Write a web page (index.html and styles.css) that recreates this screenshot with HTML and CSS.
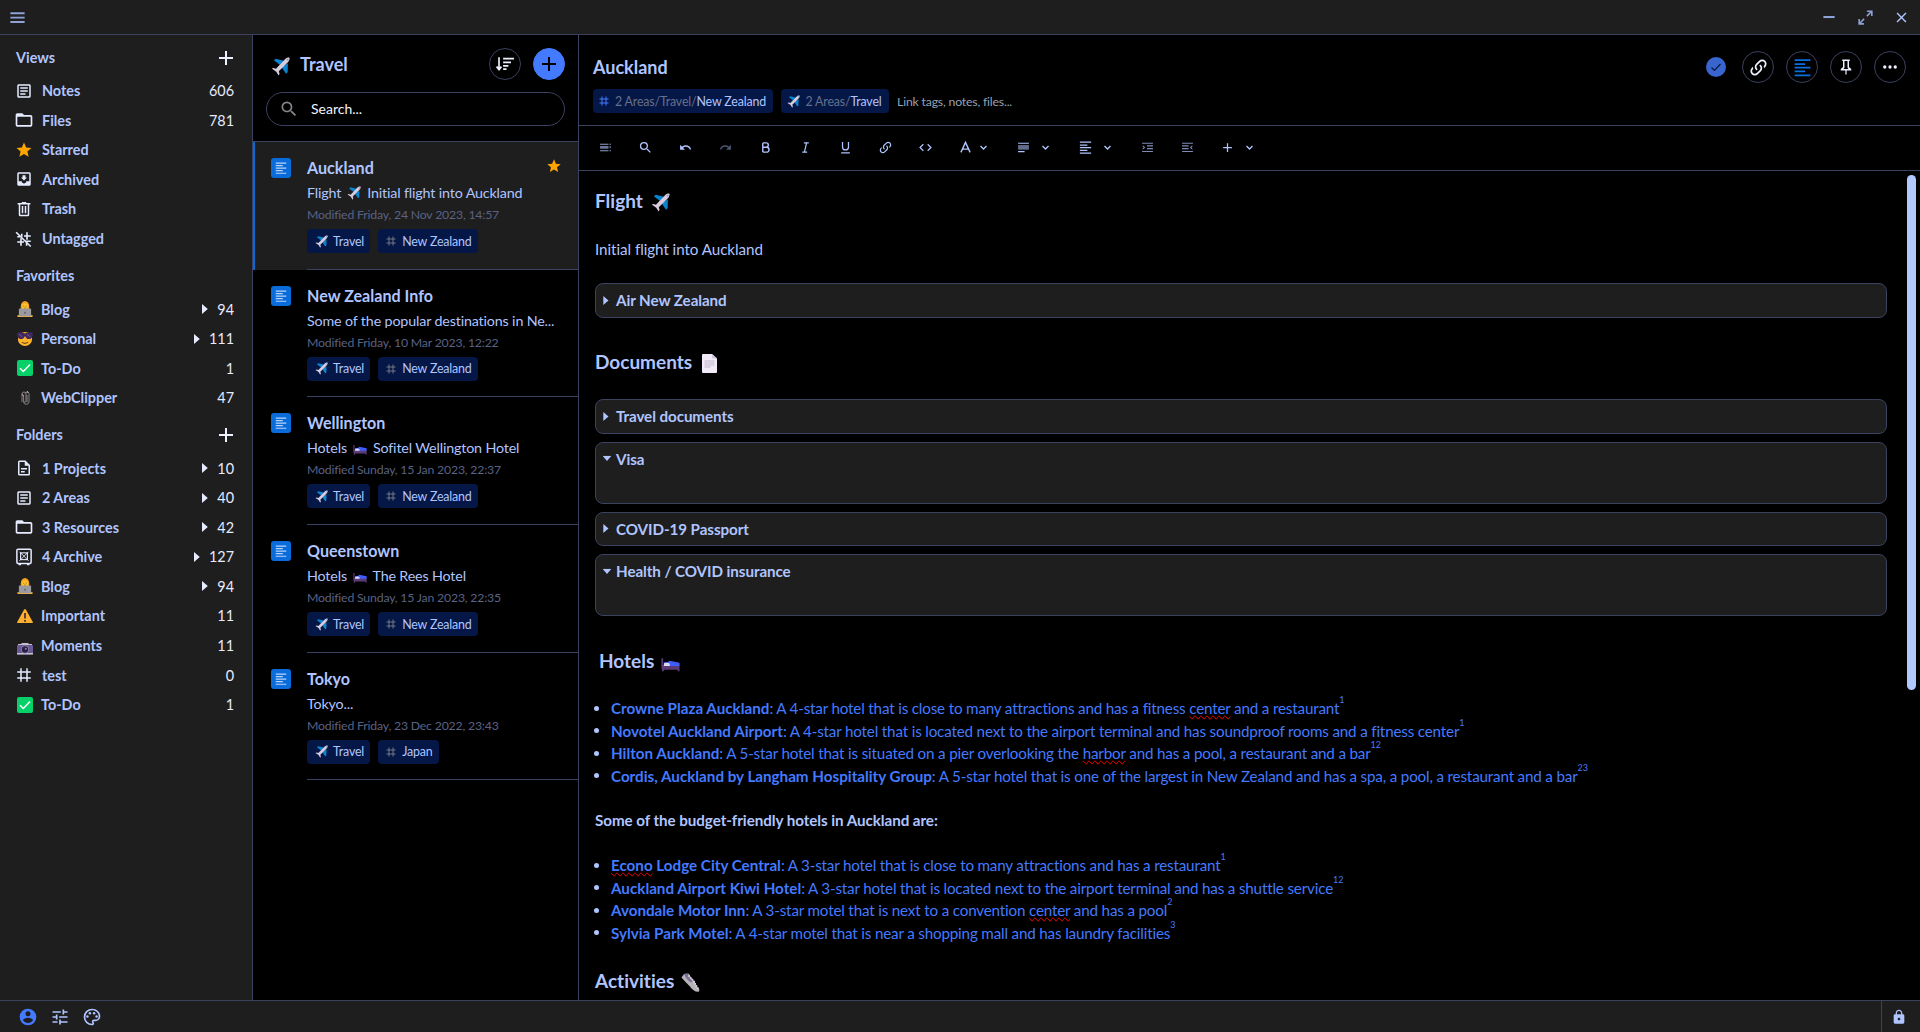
FILE: index.html
```html
<!DOCTYPE html>
<html lang="en">
<head>
<meta charset="utf-8">
<title>Auckland</title>
<link rel="stylesheet" href="styles.css">
</head>
<body>
<svg class="sprite" aria-hidden="true">
  <symbol id="menu" viewBox="0 0 24 24"><path d="M3 5.500h18v2.300H3zM3 11h18v2.300H3zM3 16.500h18v2.300H3z"/></symbol>
  <symbol id="plus" viewBox="0 0 24 24"><path d="M19 13h-6v6h-2v-6H5v-2h6V5h2v6h6z"/></symbol>
  <symbol id="article" viewBox="0 0 24 24"><path d="M19 5v14H5V5h14m0-2H5c-1.1 0-2 .9-2 2v14c0 1.1.9 2 2 2h14c1.1 0 2-.9 2-2V5c0-1.1-.9-2-2-2zm-5 14H7v-2h7v2zm3-4H7v-2h10v2zm0-4H7V7h10v2z"/></symbol>
  <symbol id="folder" viewBox="0 0 24 24"><path d="M20,18H4V8H20M20,6H12L10,4H4C2.89,4 2,4.89 2,6V18A2,2 0 0,0 4,20H20A2,2 0 0,0 22,18V8C22,6.89 21.1,6 20,6Z"/></symbol>
  <symbol id="star" viewBox="0 0 24 24"><path d="M12,17.27L18.18,21L16.54,13.97L22,9.24L14.81,8.62L12,2L9.19,8.62L2,9.24L7.45,13.97L5.82,21L12,17.27Z"/></symbol>
  <symbol id="inbox" viewBox="0 0 24 24"><path d="M19 3H4.99C3.88 3 3.01 3.89 3.01 5L3 19c0 1.1.88 2 1.99 2H19c1.1 0 2-.9 2-2V5c0-1.11-.9-2-2-2zm0 12h-4c0 1.66-1.35 3-3 3s-3-1.34-3-3H4.99V5H19v10zm-3-5h-2V7h-4v3H8l4 4 4-4z"/></symbol>
  <symbol id="trash" viewBox="0 0 24 24"><path d="M9,2.500V4H3.500V6H5V19.500A2,2 0 0,0 7,21.500H17A2,2 0 0,0 19,19.500V6H20.500V4H15V2.500H9M7,6H17V19.500H7V6M9,8V17.500H11V8H9M13,8V17.500H15V8H13Z"/></symbol>
  <symbol id="hash" viewBox="0 0 24 24"><path d="M8 3v18M16 3v18M3 8h18M3 16h18" fill="none" stroke="currentColor" stroke-width="2"/></symbol>
  <symbol id="hash-off" viewBox="0 0 24 24"><path d="M9 5v4M8 11v10M16 3v10M15.500 17v4M12 8h9M3 9h4M14 15h7M3 16h9" fill="none" stroke="currentColor" stroke-width="2.200"/><path d="M1.500 3L21 22" stroke="currentColor" stroke-width="2.200"/></symbol>
  <symbol id="file" viewBox="0 0 24 24"><path d="M6,2A2,2 0 0,0 4,4V20A2,2 0 0,0 6,22H18A2,2 0 0,0 20,20V8L14,2H6M6,4H13V9H18V20H6V4M8,12V14H16V12H8M8,16V18H13V16H8Z"/></symbol>
  <symbol id="safe" viewBox="0 0 24 24"><g fill="none" stroke="currentColor"><rect x="2.500" y="1.500" width="19" height="19" rx="1.500" stroke-width="2"/><rect x="7.500" y="6.500" width="9" height="9" stroke-width="1.500"/><path d="M6 5l12 12M18 5L6 17" stroke-width="1.200"/></g><path d="M4 20h4v3H5zM16 20h4l-1 3h-3z"/></symbol>
  <symbol id="link" viewBox="0 0 24 24"><path d="M10.590,13.410C11,13.800 11,14.440 10.590,14.830C10.200,15.220 9.560,15.220 9.170,14.830C7.220,12.880 7.220,9.710 9.170,7.760V7.760L12.710,4.220C14.660,2.270 17.830,2.270 19.780,4.220C21.730,6.170 21.730,9.340 19.780,11.290L18.290,12.780C18.300,11.960 18.170,11.140 17.890,10.360L18.360,9.880C19.540,8.710 19.540,6.810 18.360,5.640C17.190,4.460 15.290,4.460 14.120,5.640L10.590,9.170C9.410,10.340 9.410,12.240 10.590,13.410M13.410,9.170C13.800,8.780 14.440,8.780 14.830,9.170C16.780,11.120 16.780,14.290 14.830,16.240V16.240L11.290,19.780C9.340,21.730 6.170,21.730 4.220,19.780C2.270,17.830 2.270,14.660 4.220,12.710L5.710,11.220C5.700,12.040 5.830,12.860 6.110,13.650L5.640,14.120C4.460,15.290 4.460,17.190 5.640,18.360C6.810,19.540 8.710,19.540 9.880,18.360L13.410,14.830C14.590,13.660 14.590,11.760 13.410,10.590C13,10.200 13,9.560 13.410,9.170Z"/></symbol>
  <symbol id="pin" viewBox="0 0 24 24"><path d="M16,12V4H17V2H7V4H8V12L5,14.500V16.500H11.200V22H12.800V16.500H19V14.500L16,12M8.800,14.500L10,12.800V4H14V12.800L15.200,14.500H8.800Z"/></symbol>
  <symbol id="dots" viewBox="0 0 24 24"><circle cx="5" cy="12" r="2.200"/><circle cx="12" cy="12" r="2.200"/><circle cx="19" cy="12" r="2.200"/></symbol>
  <symbol id="account" viewBox="0 0 24 24"><path d="M12,19.200C9.500,19.200 7.290,17.920 6,16C6.030,14 10,12.900 12,12.900C14,12.900 17.970,14 18,16C16.710,17.920 14.500,19.200 12,19.200M12,5A3,3 0 0,1 15,8A3,3 0 0,1 12,11A3,3 0 0,1 9,8A3,3 0 0,1 12,5M12,2A10,10 0 0,0 2,12A10,10 0 0,0 12,22A10,10 0 0,0 22,12C22,6.470 17.500,2 12,2Z"/></symbol>
  <symbol id="tune" viewBox="0 0 24 24"><path d="M3 17v2h6v-2H3zM3 5v2h10V5H3zm10 16v-2h8v-2h-8v-2h-2v6h2zM7 9v2H3v2h4v2h2V9H7zm14 4v-2H11v2h10zm-6-4h2V7h4V5h-4V3h-2v6z"/></symbol>
  <symbol id="palette" viewBox="0 0 24 24"><path d="M12,22A10,10 0 0,1 2,12A10,10 0 0,1 12,2C17.500,2 22,6 22,11A6,6 0 0,1 16,17H14.200C13.900,17 13.700,17.200 13.700,17.500C13.700,17.600 13.800,17.700 13.800,17.800C14.200,18.300 14.400,18.900 14.400,19.500C14.500,20.900 13.400,22 12,22M12,4A8,8 0 0,0 4,12A8,8 0 0,0 12,20C12.300,20 12.500,19.800 12.500,19.500C12.500,19.300 12.400,19.200 12.400,19.100C12,18.600 11.800,18.100 11.800,17.500C11.800,16.100 12.900,15 14.300,15H16A4,4 0 0,0 20,11C20,7.100 16.400,4 12,4"/><circle cx="6.500" cy="11.500" r="1.500"/><circle cx="9.500" cy="7.500" r="1.500"/><circle cx="14.500" cy="7.500" r="1.500"/><circle cx="17.500" cy="11.500" r="1.500"/></symbol>
  <symbol id="lock" viewBox="0 0 24 24"><path d="M18 8h-1V6c0-2.760-2.240-5-5-5S7 3.240 7 6v2H6c-1.100 0-2 .9-2 2v10c0 1.100.9 2 2 2h12c1.100 0 2-.9 2-2V10c0-1.100-.9-2-2-2zm-6 9c-1.100 0-2-.9-2-2s.9-2 2-2 2 .9 2 2-.9 2-2 2zm3.100-9H8.900V6c0-1.710 1.390-3.100 3.100-3.100s3.100 1.390 3.100 3.100v2z"/></symbol>
  <symbol id="minus" viewBox="0 0 24 24"><path d="M4.500 10.700h15v2.700h-15z"/></symbol>
  <symbol id="expand" viewBox="0 0 24 24"><path d="M10,21V19H6.410L10.910,14.500L9.500,13.090L5,17.590V14H3V21H10M14.500,10.910L19,6.410V10H21V3H14V5H17.590L13.090,9.500L14.500,10.910Z"/></symbol>
  <symbol id="close" viewBox="0 0 24 24"><path d="M19,6.410L17.590,5L12,10.590L6.410,5L5,6.410L10.590,12L5,17.590L6.410,19L12,13.410L17.590,19L19,17.590L13.410,12L19,6.410Z"/></symbol>
  <symbol id="search" viewBox="0 0 24 24"><path d="M9.500,3A6.500,6.500 0 0,1 16,9.500C16,11.110 15.410,12.590 14.440,13.730L14.710,14H15.500L20.500,19L19,20.500L14,15.500V14.710L13.730,14.440C12.590,15.410 11.110,16 9.500,16A6.500,6.500 0 0,1 3,9.500A6.500,6.500 0 0,1 9.500,3M9.500,5C7,5 5,7 5,9.500C5,12 7,14 9.500,14C12,14 14,12 14,9.500C14,7 12,5 9.500,5Z"/></symbol>
  <symbol id="undo" viewBox="0 0 24 24"><path d="M12.500,8C9.850,8 7.450,9 5.600,10.600L2,7V16H11L7.380,12.380C8.770,11.220 10.540,10.500 12.500,10.500C16.040,10.500 19.050,12.810 20.100,16L22.470,15.220C21.080,11.030 17.150,8 12.500,8Z"/></symbol>
  <symbol id="sort" viewBox="0 0 24 24"><path d="M4 3v16M.8 15.500l3.200 4 3.200-4" fill="none" stroke="currentColor" stroke-width="2.200"/><path d="M9.500 3.500H24v2.600H9.500zM9.500 8.500h10.500v2.600h-10.500zM9.500 13.300h7v2.400h-7zM9.500 17.500h4.500v2.400h-4.500z"/></symbol>
  <symbol id="align-left" viewBox="0 0 24 24"><path d="M3 2.500h18v2H3zM3 7h12v2H3zM3 11.200h18v2H3zM3 15.500h12v2H3zM3 20h18v2H3z"/></symbol>
  <symbol id="para" viewBox="0 0 24 24"><path d="M2 3h20v2.200H2zM2 18.500h12v2.200H2z"/><path d="M2 7.500h20v8.500H2z" opacity=".55"/></symbol>
  <symbol id="toc" viewBox="0 0 24 24"><path d="M2 5h15.500v2H2zM2 17h15.500v2H2zM19.500 5h2.500v2h-2.500zM19.500 17h2.500v2h-2.500z" opacity=".8"/><path d="M2 9h15.500v5.500H2zM19.500 9.500h2.500v4h-2.500z" opacity=".6"/></symbol>
  <symbol id="bold" viewBox="0 0 24 24"><path d="M7 3.500V20.500M7 3.500H13.200a4 4 0 0 1 0 8H7M7 11.500H14a4.500 4.500 0 0 1 0 9H7" fill="none" stroke="currentColor" stroke-width="2.600"/></symbol>
  <symbol id="italic" viewBox="0 0 24 24"><path d="M9 3.500h9M6 20.500h9M14 3.500l-4 17" fill="none" stroke="currentColor" stroke-width="2.200"/></symbol>
  <symbol id="underline" viewBox="0 0 24 24"><path d="M6.500 2v9a5.500 5.500 0 0 0 11 0V2M4 22h16" fill="none" stroke="currentColor" stroke-width="2.300"/></symbol>
  <symbol id="code" viewBox="0 0 24 24"><path d="M8 6l-6 6 6 6M16 6l6 6-6 6" fill="none" stroke="currentColor" stroke-width="2.300"/></symbol>
  <symbol id="font" viewBox="0 0 24 24"><path d="M3.500 21L12 2.500 20.500 21M6.500 15h11" fill="none" stroke="currentColor" stroke-width="2.600"/></symbol>
  <symbol id="chevron" viewBox="0 0 24 24"><path d="M4 8l8 8 8-8" fill="none" stroke="currentColor" stroke-width="3.600"/></symbol>
  <symbol id="indent" viewBox="0 0 24 24"><path d="M2 3h20v2H2zM11 8h11v2H11zM11 13h11v2H11zM2 18.500h20v2H2zM3 8l5 4-5 4v-2l2-2-2-2z"/></symbol>
  <symbol id="outdent" viewBox="0 0 24 24"><path d="M2 3h20v2H2zM2 8h12v2H2zM2 13h12v2H2zM2 18.500h20v2H2zM21 8l-5 4 5 4v-2l-2-2 2-2z"/></symbol>
  <symbol id="tri" viewBox="0 0 6 10"><path d="M0 0l5.800 5L0 10z"/></symbol>
  <symbol id="plane" viewBox="0 0 20 20"><path d="M3 3.500L5 1.800 13.500 4 9.500 8.500zM17.800 6.500L17.500 16 15.800 17.600 11.200 10.800z" fill="#0a84d0"/><path d="M.8 12.200L2.600 11.600 5.200 12.400 14.500 2.500C16 .8 18.500 .3 19.400.8 20 1.600 19.300 4 17.800 5.500L8.200 15 9 17.500 8 19.500 5.500 15.500z" fill="#d6cdde"/><circle cx="17.500" cy="2.700" r=".9" fill="#5c9fcc"/></symbol>
  <symbol id="bed" viewBox="0 0 20 14"><path d="M.5 0h1.700v7H19.500v6.500H17.500V12H3v1.500H1V11H.5z" fill="#5c3b76"/><path d="M3 4h4l2-1.500 10.500 2V8H3z" fill="#3d5dff"/><path d="M3 5.500c1-1 5-1 6 0l.5 2.500H3z" fill="#e0d6ef"/></symbol>
  <symbol id="blogger" viewBox="0 0 16 17"><path d="M3.500 9V5.500a4.500 5.500 0 0 1 9 0V9z" fill="#f5a11f"/><circle cx="8" cy="5.800" r="3.300" fill="#ffc52b"/><path d="M6 5.500h1.200M8.800 5.500H10M7 7.500h2" stroke="#7a4c19" stroke-width=".7"/><path d="M0 15h16v2H0z" fill="#f2b13a"/><rect x="1.500" y="8" width="13" height="8.200" rx="1" fill="#9b9aa0"/><circle cx="8" cy="12.500" r="1" fill="#65616b"/></symbol>
  <symbol id="cool" viewBox="0 0 18 17"><circle cx="9" cy="8.500" r="8" fill="#fbb32a"/><path d="M.3 1.500c2.500-1 6-.5 8.700.8 2.700-1.300 6.200-1.800 8.700-.8.500 3.500-1 7-4.200 7C11 8.500 10 7 9 5 8 7 7 8.500 4.500 8.500 1.300 8.500-.2 5 .3 1.500z" fill="#40285e"/><path d="M2.500 3l3 3M11.500 3l3 3" stroke="#7d68a0"/><path d="M5.500 12c2 1.600 5 1.600 7 0" fill="none" stroke="#7a4418" stroke-width="1.200"/></symbol>
  <symbol id="check" viewBox="0 0 16 16"><rect width="16" height="16" rx="2" fill="#05d168"/><path d="M3 8.300l3.300 3.200L13 4.500" fill="none" stroke="#fff" stroke-width="1.500"/></symbol>
  <symbol id="clips" viewBox="0 0 16 16"><g fill="none" stroke="#928b92"><path d="M5 12V4a2 2 0 0 1 4 0v7a1.200 1.200 0 0 1-2.400 0V5" stroke-width=".9"/><path d="M8 3.500a2.200 2.200 0 0 1 4 0V12a2.800 2.800 0 0 1-5.500 0M10 5v7" stroke-width=".9"/></g><path d="M5 4l1.500 2M10 1l1.500 2" stroke="#c9b5b5"/></symbol>
  <symbol id="warning" viewBox="0 0 16 14"><path d="M7 .8q1-1.400 2 0L15.800 13q.3 1-.8 1H1q-1.100 0-.8-1z" fill="#ffae2e"/><path d="M8 4v5.500M8 11v1.700" stroke="#433" stroke-width="1.800"/></symbol>
  <symbol id="camera" viewBox="0 0 16 12"><path d="M1 1h3.500V0h7v1H15v3H1z" fill="#c6bccd"/><rect y="2" width="16" height="9.500" rx="1" fill="#6a5a94"/><path d="M0 10h16v1.500H0z" fill="#c9c3d2"/><circle cx="8" cy="6.500" r="4" fill="#8f86a8"/><circle cx="8" cy="6.500" r="3.200" fill="#2d2046"/><circle cx="8.800" cy="5.700" r="1" fill="#8f7ab8"/></symbol>
  <symbol id="page" viewBox="0 0 15 19"><path d="M0 1q0-1 1-1h9l5 4.500V18q0 1-1 1H1q-1 0-1-1z" fill="#f2ebf7"/><path d="M10 0l5 4.500h-4q-1 0-1-1z" fill="#cfc5d9"/><path d="M2.500 6h10v6h-4v2h-6z" fill="#d9d0e2"/></symbol>
  <symbol id="shoe" viewBox="0 0 19 19"><path d="M.5 4.500L3 1 8 .8c1 3 3 5 5.500 7.500 1 2 1.500 5.500 4.500 7.500.8 1.500.3 3-.8 3-3 .2-6-2-8.500-5.500C6 10.500 3 7.500.5 4.500z" fill="#b8b3b8"/><path d="M3 1l3.500-.7c1 3 3.500 5.200 6 7.700L10 9.500C7 7.500 4.500 5 3 1z" fill="#7b6f98"/><path d="M7.500 2.500l5 5.500 5 8.500" fill="none" stroke="#dedbe0" stroke-width="1.800" stroke-dasharray="1.600 .9"/></symbol>
</svg>

<div class="app">
  <header class="titlebar">
    <svg class="icon menu"><use href="#menu"/></svg>
    <div class="window-buttons">
      <svg class="icon minimize"><use href="#minus"/></svg>
      <svg class="icon maximize"><use href="#expand"/></svg>
      <svg class="icon close"><use href="#close"/></svg>
    </div>
  </header>

  <div class="panes">
    <nav class="sidebar">
      <h2>Views<svg class="icon add"><use href="#plus"/></svg></h2>
      <ul>
        <li><svg class="icon"><use href="#article"/></svg><b>Notes</b><span>606</span></li>
        <li><svg class="icon big"><use href="#folder"/></svg><b>Files</b><span>781</span></li>
        <li><svg class="icon gold"><use href="#star"/></svg><b>Starred</b></li>
        <li><svg class="icon"><use href="#inbox"/></svg><b>Archived</b></li>
        <li><svg class="icon"><use href="#trash"/></svg><b>Trash</b></li>
        <li><svg class="icon"><use href="#hash-off"/></svg><b>Untagged</b></li>
      </ul>
      <h2>Favorites</h2>
      <ul>
        <li><svg class="emoji"><use href="#blogger"/></svg><b>Blog</b><svg class="tri"><use href="#tri"/></svg><span>94</span></li>
        <li><svg class="emoji"><use href="#cool"/></svg><b>Personal</b><svg class="tri"><use href="#tri"/></svg><span>111</span></li>
        <li><svg class="emoji"><use href="#check"/></svg><b>To-Do</b><span>1</span></li>
        <li><svg class="emoji"><use href="#clips"/></svg><b>WebClipper</b><span>47</span></li>
      </ul>
      <h2>Folders<svg class="icon add"><use href="#plus"/></svg></h2>
      <ul>
        <li><svg class="icon"><use href="#file"/></svg><b>1 Projects</b><svg class="tri"><use href="#tri"/></svg><span>10</span></li>
        <li><svg class="icon"><use href="#article"/></svg><b>2 Areas</b><svg class="tri"><use href="#tri"/></svg><span>40</span></li>
        <li><svg class="icon big"><use href="#folder"/></svg><b>3 Resources</b><svg class="tri"><use href="#tri"/></svg><span>42</span></li>
        <li><svg class="icon"><use href="#safe"/></svg><b>4 Archive</b><svg class="tri"><use href="#tri"/></svg><span>127</span></li>
        <li><svg class="emoji"><use href="#blogger"/></svg><b>Blog</b><svg class="tri"><use href="#tri"/></svg><span>94</span></li>
        <li><svg class="emoji"><use href="#warning"/></svg><b>Important</b><span>11</span></li>
        <li><svg class="emoji low"><use href="#camera"/></svg><b>Moments</b><span>11</span></li>
        <li><svg class="icon"><use href="#hash"/></svg><b>test</b><span>0</span></li>
        <li><svg class="emoji"><use href="#check"/></svg><b>To-Do</b><span>1</span></li>
      </ul>
    </nav>

    <section class="notes">
      <div class="notes-head">
        <div class="notes-title">
          <svg class="plane"><use href="#plane"/></svg>
          <h1>Travel</h1>
          <button class="round"><svg class="icon"><use href="#sort"/></svg></button>
          <button class="round primary"><svg class="icon"><use href="#plus"/></svg></button>
        </div>
        <div class="search"><svg class="icon"><use href="#search"/></svg>Search...</div>
      </div>
      <article class="note selected">
        <span class="badge"><svg><use href="#align-left"/></svg></span>
        <div class="note-body">
          <h3>Auckland<svg class="icon gold"><use href="#star"/></svg></h3>
          <p>Flight <svg class="inline"><use href="#plane"/></svg> Initial flight into Auckland</p>
          <time>Modified Friday, 24 Nov 2023, 14:57</time>
          <div class="tags"><span class="tag"><svg><use href="#plane"/></svg>Travel</span><span class="tag"><svg class="hash"><use href="#hash"/></svg>New Zealand</span></div>
        </div>
      </article>
      <article class="note">
        <span class="badge"><svg><use href="#align-left"/></svg></span>
        <div class="note-body">
          <h3>New Zealand Info</h3>
          <p>Some of the popular destinations in Ne...</p>
          <time>Modified Friday, 10 Mar 2023, 12:22</time>
          <div class="tags"><span class="tag"><svg><use href="#plane"/></svg>Travel</span><span class="tag"><svg class="hash"><use href="#hash"/></svg>New Zealand</span></div>
        </div>
      </article>
      <article class="note">
        <span class="badge"><svg><use href="#align-left"/></svg></span>
        <div class="note-body">
          <h3>Wellington</h3>
          <p>Hotels <svg class="inline bed"><use href="#bed"/></svg> Sofitel Wellington Hotel</p>
          <time>Modified Sunday, 15 Jan 2023, 22:37</time>
          <div class="tags"><span class="tag"><svg><use href="#plane"/></svg>Travel</span><span class="tag"><svg class="hash"><use href="#hash"/></svg>New Zealand</span></div>
        </div>
      </article>
      <article class="note">
        <span class="badge"><svg><use href="#align-left"/></svg></span>
        <div class="note-body">
          <h3>Queenstown</h3>
          <p>Hotels <svg class="inline bed"><use href="#bed"/></svg> The Rees Hotel</p>
          <time>Modified Sunday, 15 Jan 2023, 22:35</time>
          <div class="tags"><span class="tag"><svg><use href="#plane"/></svg>Travel</span><span class="tag"><svg class="hash"><use href="#hash"/></svg>New Zealand</span></div>
        </div>
      </article>
      <article class="note">
        <span class="badge"><svg><use href="#align-left"/></svg></span>
        <div class="note-body">
          <h3>Tokyo</h3>
          <p>Tokyo...</p>
          <time>Modified Friday, 23 Dec 2022, 23:43</time>
          <div class="tags"><span class="tag"><svg><use href="#plane"/></svg>Travel</span><span class="tag"><svg class="hash"><use href="#hash"/></svg>Japan</span></div>
        </div>
      </article>
    </section>

    <main class="editor">
      <header class="editor-head">
        <div class="editor-title">
          <h1>Auckland</h1>
          <div class="links">
            <span class="tag"><svg class="hash"><use href="#hash"/></svg><i>2 Areas/Travel/</i>New Zealand</span>
            <span class="tag"><svg><use href="#plane"/></svg><i>2 Areas/</i>Travel</span>
            <span class="hint">Link tags, notes, files...</span>
          </div>
        </div>
        <div class="actions">
          <span class="synced"><svg viewBox="0 0 20 20"><path d="M5.500 10.500l3 3 6-6.500" fill="none" stroke="#0a1638" stroke-width="1.200"/></svg></span>
          <button class="round"><svg class="icon wide"><use href="#link"/></svg></button>
          <button class="round blue"><svg class="icon wide"><use href="#align-left"/></svg></button>
          <button class="round"><svg class="icon"><use href="#pin"/></svg></button>
          <button class="round"><svg class="icon"><use href="#dots"/></svg></button>
        </div>
      </header>
      <div class="toolbar">
        <span><svg><use href="#toc"/></svg></span>
        <span><svg class="large"><use href="#search"/></svg></span>
        <span><svg><use href="#undo"/></svg></span>
        <span class="dim"><svg class="flip"><use href="#undo"/></svg></span>
        <span><svg><use href="#bold"/></svg></span>
        <span><svg><use href="#italic"/></svg></span>
        <span><svg><use href="#underline"/></svg></span>
        <span><svg class="large"><use href="#link"/></svg></span>
        <span><svg><use href="#code"/></svg></span>
        <span class="menu-button narrow"><svg><use href="#font"/></svg><svg class="chev"><use href="#chevron"/></svg></span>
        <span class="menu-button"><svg><use href="#para"/></svg><svg class="chev"><use href="#chevron"/></svg></span>
        <span class="menu-button"><svg class="large"><use href="#align-left"/></svg><svg class="chev"><use href="#chevron"/></svg></span>
        <span class="mid"><svg><use href="#indent"/></svg></span>
        <span class="mid"><svg><use href="#outdent"/></svg></span>
        <span class="menu-button"><svg class="large"><use href="#plus"/></svg><svg class="chev"><use href="#chevron"/></svg></span>
      </div>
      <div class="scroller">
        <div class="document">
          <h2>Flight <svg class="inline plane"><use href="#plane"/></svg></h2>
          <p>Initial flight into Auckland</p>
          <div class="fold"><svg class="tri"><use href="#tri"/></svg>Air New Zealand</div>
          <h2>Documents <svg class="inline page"><use href="#page"/></svg></h2>
          <div class="folds">
            <div class="fold"><svg class="tri"><use href="#tri"/></svg>Travel documents</div>
            <div class="fold open"><svg class="tri"><use href="#tri"/></svg>Visa</div>
            <div class="fold"><svg class="tri"><use href="#tri"/></svg>COVID-19 Passport</div>
            <div class="fold open"><svg class="tri"><use href="#tri"/></svg>Health / COVID insurance</div>
          </div>
          <h2 class="shifted">Hotels <svg class="inline bed"><use href="#bed"/></svg></h2>
          <ul>
            <li><a><b>Crowne Plaza Auckland</b>: A 4-star hotel that is close to many attractions and has a fitness <u>center</u> and a restaurant<sup>1</sup></a></li>
            <li><a><b>Novotel Auckland Airport</b>: A 4-star hotel that is located next to the airport terminal and has soundproof rooms and a fitness center<sup>1</sup></a></li>
            <li><a><b>Hilton Auckland</b>: A 5-star hotel that is situated on a pier overlooking the <u>harbor</u> and has a pool, a restaurant and a bar<sup>12</sup></a></li>
            <li><a><b>Cordis, Auckland by Langham Hospitality Group</b>: A 5-star hotel that is one of the largest in New Zealand and has a spa, a pool, a restaurant and a bar<sup>23</sup></a></li>
          </ul>
          <p><b>Some of the budget-friendly hotels in Auckland are:</b></p>
          <ul class="budget">
            <li><a><b><u>Econo</u> Lodge City Central</b>: A 3-star hotel that is close to many attractions and has a restaurant<sup>1</sup></a></li>
            <li><a><b>Auckland Airport Kiwi Hotel</b>: A 3-star hotel that is located next to the airport terminal and has a shuttle service<sup>12</sup></a></li>
            <li><a><b>Avondale Motor Inn</b>: A 3-star motel that is next to a convention <u>center</u> and has a pool<sup>2</sup></a></li>
            <li><a><b>Sylvia Park Motel</b>: A 4-star motel that is near a shopping mall and has laundry facilities<sup>3</sup></a></li>
          </ul>
          <h2>Activities <svg class="inline"><use href="#shoe"/></svg></h2>
        </div>
        <div class="scrollbar"></div>
      </div>
    </main>
  </div>

  <footer class="statusbar">
    <svg class="icon user"><use href="#account"/></svg>
    <svg class="icon"><use href="#tune"/></svg>
    <svg class="icon"><use href="#palette"/></svg>
    <div class="lock"><svg class="icon"><use href="#lock"/></svg></div>
  </footer>
</div>
</body>
</html>
```
FILE: styles.css
```css
:root {
  --line: #3b4160;
  --panel: #1e1e1e;
  --text: #b0c5ff;
  --blue: #447aff;
  --tag: #051746;
  --gold: #ffa502;
}

* { box-sizing: border-box; }

body {
  margin: 0;
  background: #000;
  color: var(--text);
  font-family: Lato, sans-serif;
  font-size: 14.4px;
  font-variant-ligatures: none;
}

h1, h2, h3, p, ul { margin: 0; padding: 0; }
ul { list-style: none; }
svg { display: block; fill: currentColor; flex: none; }
.sprite { position: absolute; width: 0; height: 0; }
.icon { width: 20px; height: 20px; }
.gold { color: var(--gold); }

.app { display: flex; flex-direction: column; height: 1032px; overflow: hidden; }

/* window bar */
.titlebar {
  display: flex;
  align-items: center;
  justify-content: space-between;
  height: 35px;
  padding: 0 10px 0 8px;
  background: var(--panel);
  border-bottom: 1px solid var(--line);
}
.titlebar .icon { color: #8ea2d6; }
.titlebar .menu { width: 19px; height: 19px; }
.titlebar .minimize { width: 18px; height: 18px; margin-right: 18px; }
.titlebar .maximize { width: 19px; height: 19px; margin-right: 18px; }
.titlebar .close { width: 17px; height: 17px; color: var(--text); }
.window-buttons { display: flex; align-items: center; }

.panes { display: flex; height: 965px; }

/* sidebar */
.sidebar {
  width: 253px;
  flex: none;
  background: var(--panel);
  border-right: 1px solid var(--line);
  padding: 0 18px 0 16px;
}
.sidebar h2 {
  display: flex;
  align-items: center;
  justify-content: space-between;
  height: 41px;
  padding-top: 4px;
  font-size: 14.4px;
  font-weight: 700;
}
.sidebar .add { width: 24px; height: 24px; margin-right: -4px; color: #eef1ff; }
.sidebar li { display: flex; align-items: center; height: 29.56px; color: #e6ebff; }
.sidebar li .icon { width: 18px; height: 18px; margin: 0 9px 0 -1px; }
.sidebar li .icon.big { width: 20px; height: 20px; margin: 0 8px 0 -2px; }
.sidebar li .emoji { width: 16px; height: 16px; margin: 0 8px 0 1px; }
.sidebar li .emoji.low { margin-top: 7px; }
.sidebar li b { flex: 1; color: var(--text); }
.sidebar .tri { width: 6px; height: 10px; margin-right: 9px; }

/* note list */
.notes { width: 326px; flex: none; border-right: 1px solid var(--line); }
.notes-head { height: 107px; padding: 13px 13px 0; border-bottom: 1px solid var(--line); }
.notes-title { display: flex; align-items: center; height: 32px; gap: 12px; }
.notes-title .plane { width: 19px; height: 19px; margin: 4px -2px 0 5px; }
.notes-title h1 { flex: 1; font-size: 18px; }
.round {
  display: flex;
  align-items: center;
  justify-content: center;
  width: 32px;
  height: 32px;
  padding: 0;
  border: 1px solid var(--line);
  border-radius: 50%;
  background: transparent;
  color: #eef1ff;
}
.round .icon { width: 18px; height: 18px; }
.round .icon.wide { width: 21px; height: 21px; }
.round.primary { background: var(--blue); border-color: var(--blue); color: #000; }
.round.primary .icon { width: 24px; height: 24px; }
.round.blue { color: #0a6fdf; }
.search {
  display: flex;
  align-items: center;
  gap: 12px;
  height: 34px;
  margin-top: 12px;
  padding: 0 12px 1px;
  border: 1px solid var(--line);
  border-radius: 17px;
  color: #f2f4ff;
  font-size: 14px;
}
.search .icon { width: 20px; height: 20px; color: #85868c; }

.note { display: flex; height: 127.7px; padding-left: 18px; }
.note.selected { padding-left: 16px; border-left: 2px solid #0a6ad4; background: #1e1e1e; }
.badge {
  display: flex;
  align-items: center;
  justify-content: center;
  width: 20px;
  height: 20px;
  margin-top: 16px;
  border-radius: 3px;
  background: #0a6cdb;
  color: #b5d4f7;
}
.badge svg { width: 14px; height: 14px; }
.note-body { flex: 1; margin-left: 16px; padding-top: 14px; border-bottom: 1px solid var(--line); }
.note h3 { display: flex; justify-content: space-between; height: 25px; line-height: 24px; font-size: 16.1px; }
.note h3 .icon { width: 16px; height: 16px; margin: 2px 16px 0 0; }
.note p { height: 23px; line-height: 23px; font-size: 14.3px; letter-spacing: -.16px; white-space: nowrap; }
.note time { display: block; height: 25px; line-height: 22px; font-size: 12.3px; letter-spacing: -.2px; color: #5a6284; }
.inline { display: inline-block; width: 14px; height: 14px; margin: 0 2.5px; vertical-align: -2px; }
.inline.bed { height: 10px; }
.tags, .links { display: flex; gap: 8px; }
.tag {
  display: flex;
  align-items: center;
  height: 24px;
  padding: 0 6px 0 8px;
  border-radius: 4px;
  background: var(--tag);
  font-size: 12.4px;
  letter-spacing: -.16px;
}
.tag svg { width: 13px; height: 13px; margin-right: 5px; }
.tag .hash { width: 12px; height: 12px; margin: 0 5px 0 -1px; color: #737885; }
.tag i { font-style: normal; color: #65708a; }

/* editor */
.editor { flex: 1; display: flex; flex-direction: column; }
.editor-head {
  display: flex;
  justify-content: space-between;
  height: 91px;
  padding: 16px 14px 0;
  border-bottom: 1px solid var(--line);
}
.editor-title h1 { height: 38px; line-height: 33px; font-size: 18px; }
.links .tag { padding: 0 7.5px 0 6px; }
.links .hash { color: var(--blue); }
.hint { font-size: 12.3px; letter-spacing: -.2px; line-height: 25px; color: #95a0b5; }
.actions { display: flex; align-items: center; gap: 12px; height: 32px; }
.synced { width: 20px; height: 20px; margin-right: 4px; border-radius: 50%; background: #3965cf; }
.toolbar { display: flex; height: 45px; padding: 0 0 1px 6px; border-bottom: 1px solid var(--line); }
.toolbar > span { display: flex; align-items: center; justify-content: center; width: 40px; }
.toolbar svg { width: 13px; height: 13px; }
.toolbar svg.large { width: 15px; height: 15px; margin: 0 -1px; }
.toolbar .flip { transform: scaleX(-1); }
.toolbar .dim { color: #4c5571; }
.toolbar .mid { color: #7f8db5; }
.toolbar .menu-button { justify-content: flex-start; gap: 11px; width: 62px; padding-left: 13.5px; }
.toolbar .menu-button.narrow { gap: 7px; width: 58px; }
.toolbar .menu-button .chev { width: 9px; height: 9px; }

.scroller { flex: 1; display: flex; min-height: 0; padding: 4px 4px 0 16px; overflow: hidden; }
.scrollbar { width: 9px; height: 515px; margin-left: 20px; border-radius: 5px; background: #b3c7ff; }
.document { flex: 1; padding-top: 14.4px; font-size: 15.2px; line-height: 22.4px; }
.document h2 { height: 24px; line-height: 24px; margin-bottom: 25px; font-size: 19px; }
.document h2 .inline { width: 19px; height: 19px; margin: 0 2px; vertical-align: -4px; }
.document h2 .plane { margin-left: 4px; }
.document h2 .bed { height: 14px; }
.document h2 .page { width: 15px; margin-left: 5px; }
.document h2.shifted { padding-left: 4px; margin-bottom: 24.2px; }
.document p { margin-bottom: 22.4px; letter-spacing: -.06px; }
.document ul { margin-bottom: 22.2px; }
.document ul.budget { margin-bottom: 24.6px; }
.document > .fold, .folds { margin-bottom: 32.6px; }
.folds { display: flex; flex-direction: column; gap: 8px; }
.fold {
  display: flex;
  align-items: center;
  height: 34.4px;
  padding-left: 7px;
  border: 1px solid var(--line);
  border-radius: 8px;
  background: var(--panel);
  font-weight: 700;
  letter-spacing: -.08px;
}
.fold .tri { width: 6px; height: 9px; margin-right: 7px; }
.fold.open { height: 62.2px; padding-bottom: 27.8px; }
.fold.open .tri { margin: 0 6px 0 1px; transform: rotate(90deg); }
.document li { display: flex; align-items: center; height: 22.5px; }
.document li::before { content: ""; width: 5px; height: 5px; margin-right: 12px; margin-left: -1px; border-radius: 50%; background: var(--text); }
.document a { color: var(--blue); letter-spacing: -.17px; white-space: nowrap; }
.document a b { letter-spacing: 0; }
.document u { text-decoration: spelling-error; }
sup { font-size: 9px; line-height: 0; vertical-align: 11px; letter-spacing: 0; }

/* status bar */
.statusbar {
  display: flex;
  align-items: center;
  gap: 12px;
  height: 32px;
  padding-left: 18px;
  background: var(--panel);
  border-top: 1px solid var(--line);
}
.statusbar .user { color: var(--blue); }
.lock { display: flex; align-items: center; justify-content: center; width: 39px; height: 31px; margin-left: auto; padding-right: 4px; border-left: 1px solid var(--line); }
.lock .icon { width: 16px; height: 16px; }
```
